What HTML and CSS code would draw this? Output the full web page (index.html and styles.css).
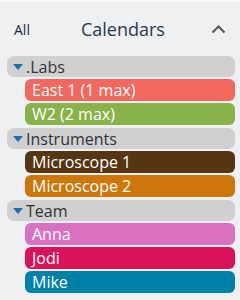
FILE: index.html
```html
<!DOCTYPE html>
<html lang="en">
<head>
    <meta charset="UTF-8">
    <title>Calendars</title>
    <link rel="stylesheet" href="styles.css">
</head>
<body>
    <div class="panel">
        <div class="panel-head">
            <span class="all">All</span>
            <span class="title">Calendars</span>
            <svg class="chevron" width="15" height="10" viewBox="0 0 15 10">
                <polyline points="1.5,8.5 7.5,2.5 13.5,8.5" fill="none" stroke="#555" stroke-width="2"/>
            </svg>
        </div>
        <div class="groups">
            <div class="group">
                <div class="group-name"><span class="caret"></span>.Labs</div>
                <div class="cal" style="background-color: #f4675e;">East 1 (1 max)</div>
                <div class="cal" style="background-color: #89b24a;">W2 (2 max)</div>
            </div>
            <div class="group">
                <div class="group-name"><span class="caret"></span>Instruments</div>
                <div class="cal" style="background-color: #553512;">Microscope 1</div>
                <div class="cal" style="background-color: #cf760b;">Microscope 2</div>
            </div>
            <div class="group">
                <div class="group-name"><span class="caret"></span>Team</div>
                <div class="cal" style="background-color: #da70c0;">Anna</div>
                <div class="cal" style="background-color: #d9125a;">Jodi</div>
                <div class="cal" style="background-color: #0081a8;">Mike</div>
            </div>
        </div>
    </div>
</body>
</html>
```

FILE: styles.css
```css
body {
    margin: 0;
    background-color: #eff0f2;
    font-family: 'Open Sans', sans-serif;
}

.panel {
    border-top: 2px solid #fafafa;
    min-height: 298px;
}

.panel-head {
    display: flex;
    align-items: center;
    height: 54px;
    padding: 0 14px;
}

.all {
    font-size: 14px;
    color: #1d2b3a;
}

.title {
    margin-left: 51px;
    font-size: 18px;
    color: #2b3a4a;
}

.chevron {
    margin-left: auto;
}

.groups {
    display: flex;
    flex-direction: column;
    gap: 3px;
    padding: 0 5px 0 7px;
}

.group {
    display: flex;
    flex-direction: column;
    gap: 2px;
}

.group-name {
    display: flex;
    align-items: center;
    height: 21px;
    background-color: #d0d0d0;
    border-radius: 7px;
    font-size: 16px;
    color: #333;
}

.caret {
    width: 0;
    height: 0;
    margin: 1px 3px 0 6px;
    border-left: 5px solid transparent;
    border-right: 5px solid transparent;
    border-top: 6px solid #1f6fb5;
}

.cal {
    display: flex;
    align-items: center;
    height: 22px;
    margin-left: 18px;
    padding-left: 7px;
    border-radius: 6px;
    font-size: 16px;
    font-weight: 500;
    color: #fff;
}
```
